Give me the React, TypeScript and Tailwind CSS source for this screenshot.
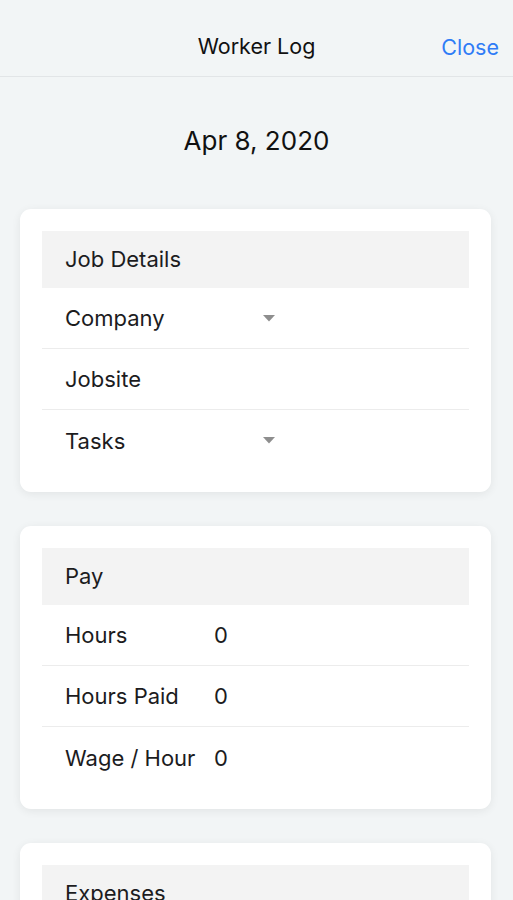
import React from "react";

function Caret() {
  return (
    <svg width="12" height="7" viewBox="0 0 12 7" className="block">
      <polygon points="0,0 12,0 6,6.5" fill="#8e8e8e" />
    </svg>
  );
}

function Row({ label, value, caret, last }: { label: string; value?: string; caret?: boolean; last?: boolean }) {
  return (
    <div className={`flex items-center h-[61px] px-[23px] ${last ? "" : "border-b border-[#ececec]"}`}>
      <div className="w-[149px] text-[22px] text-[#1c1c1e] pt-[1px]">{label}</div>
      {value !== undefined && <div className="text-[22px] text-[#1c1c1e] pt-[1px]">{value}</div>}
      {caret && (
        <div className="ml-[49px]">
          <Caret />
        </div>
      )}
    </div>
  );
}

function Card({ title, children }: { title: string; children?: React.ReactNode }) {
  return (
    <div className="bg-white rounded-[11px] shadow-[0_2px_10px_rgba(0,0,0,0.07)] pt-[22px] px-[22px] pb-[21px]">
      <div className="h-[57px] bg-[#f3f3f3] flex items-center px-[23px] text-[22px] text-[#1c1c1e]">{title}</div>
      {children}
    </div>
  );
}

export default function App() {
  return (
    <div
      className="w-[513px] h-[900px] overflow-hidden bg-[#f2f5f6]"
      style={{ fontFamily: "Inter, 'Noto Sans', sans-serif" }}
    >
      <div className="h-[77px] border-b border-[#e2e5e7] flex items-center justify-center relative">
        <div className="text-[21.5px] text-[#111] mt-[17px]">Worker Log</div>
        <div className="absolute right-[14px] top-[31px] text-[21.5px] text-[#2f7cf6]">Close</div>
      </div>
      <div className="h-[131px] flex justify-center pt-[44px]">
        <div className="text-[26px] text-[#111]">Apr 8, 2020</div>
      </div>
      <div className="pl-[20px] pr-[22px] flex flex-col gap-[34px] pt-[1px]">
        <Card title="Job Details">
          <Row label="Company" caret />
          <Row label="Jobsite" />
          <Row label="Tasks" caret last />
        </Card>
        <Card title="Pay">
          <Row label="Hours" value="0" />
          <Row label="Hours Paid" value="0" />
          <Row label="Wage / Hour" value="0" last />
        </Card>
        <Card title="Expenses">
          <div className="h-[40px]" />
        </Card>
      </div>
    </div>
  );
}
